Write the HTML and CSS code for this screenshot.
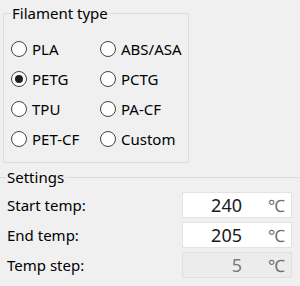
FILE: index.html
```html
<!DOCTYPE html>
<html lang="en">
<head>
    <meta charset="UTF-8">
    <meta name="viewport" content="width=device-width, initial-scale=1.0">
    <title>Temperature tower</title>
    <link rel="stylesheet" href="styles.css">
</head>
<body>

    <fieldset class="group filament">
        <legend>Filament type</legend>
        <div class="options">
            <label class="option"><span class="radio"></span>PLA</label>
            <label class="option"><span class="radio"></span>ABS/ASA</label>
            <label class="option"><span class="radio checked"></span>PETG</label>
            <label class="option"><span class="radio"></span>PCTG</label>
            <label class="option"><span class="radio"></span>TPU</label>
            <label class="option"><span class="radio"></span>PA-CF</label>
            <label class="option"><span class="radio"></span>PET-CF</label>
            <label class="option"><span class="radio"></span>Custom</label>
        </div>
    </fieldset>

    <fieldset class="group settings">
        <legend>Settings</legend>
        <div class="row">
            <span class="label">Start temp:</span>
            <div class="field"><span class="value">240</span><span class="unit">℃</span></div>
        </div>
        <div class="row">
            <span class="label">End temp:</span>
            <div class="field"><span class="value">205</span><span class="unit">℃</span></div>
        </div>
        <div class="row">
            <span class="label">Temp step:</span>
            <div class="field disabled"><span class="value">5</span><span class="unit">℃</span></div>
        </div>
    </fieldset>

</body>
</html>
```

FILE: styles.css
```css
body {
    margin: 0;
    background-color: #f0f0f0;
    font-family: "Noto Sans", "Open Sans", sans-serif;
    font-size: 15px;
    color: #000000;
}

.group {
    margin: 0;
    min-width: 0;
}
.group legend {
    padding: 0 1px;
    line-height: 20px;
}

/* Filament type box */
.filament {
    margin: 3px 0 0 3px;
    width: 186px;
    box-sizing: border-box;
    border: 1px solid #dcdcdc;
    padding: 11px 6px 8px 7px;
}
.options {
    display: grid;
    grid-template-columns: 89px 1fr;
    grid-auto-rows: 30px;
}
.option {
    display: flex;
    align-items: center;
    gap: 5px;
}
.radio {
    width: 14px;
    height: 14px;
    border: 1px solid #444444;
    border-radius: 50%;
    background-color: #ffffff;
    display: flex;
    align-items: center;
    justify-content: center;
}
.radio.checked::after {
    content: "";
    width: 8px;
    height: 8px;
    border-radius: 50%;
    background-color: #1f1f1f;
}

/* Settings box */
.settings {
    margin-top: 4px;
    border: 0;
    border-top: 1px solid #dcdcdc;
    padding: 5px 8px 0 6px;
    display: flex;
    flex-direction: column;
    gap: 4px;
}
.row {
    display: flex;
    align-items: center;
    height: 26px;
    padding-left: 1px;
}
.label {
    flex: 1;
}
.field {
    width: 110px;
    height: 26px;
    box-sizing: border-box;
    border: 1px solid #e3e3e3;
    background-color: #ffffff;
    display: flex;
    align-items: center;
}
.field .value {
    flex: 1;
    text-align: right;
    font-size: 18px;
    color: #1a1a1a;
}
.field .unit {
    width: 49px;
    text-align: right;
    padding-right: 6px;
    box-sizing: border-box;
    font-size: 17px;
    color: #707070;
}
.field.disabled {
    background-color: #ececec;
    border-color: #e0e0e0;
}
.field.disabled .value {
    color: #7a7a7a;
}
```
